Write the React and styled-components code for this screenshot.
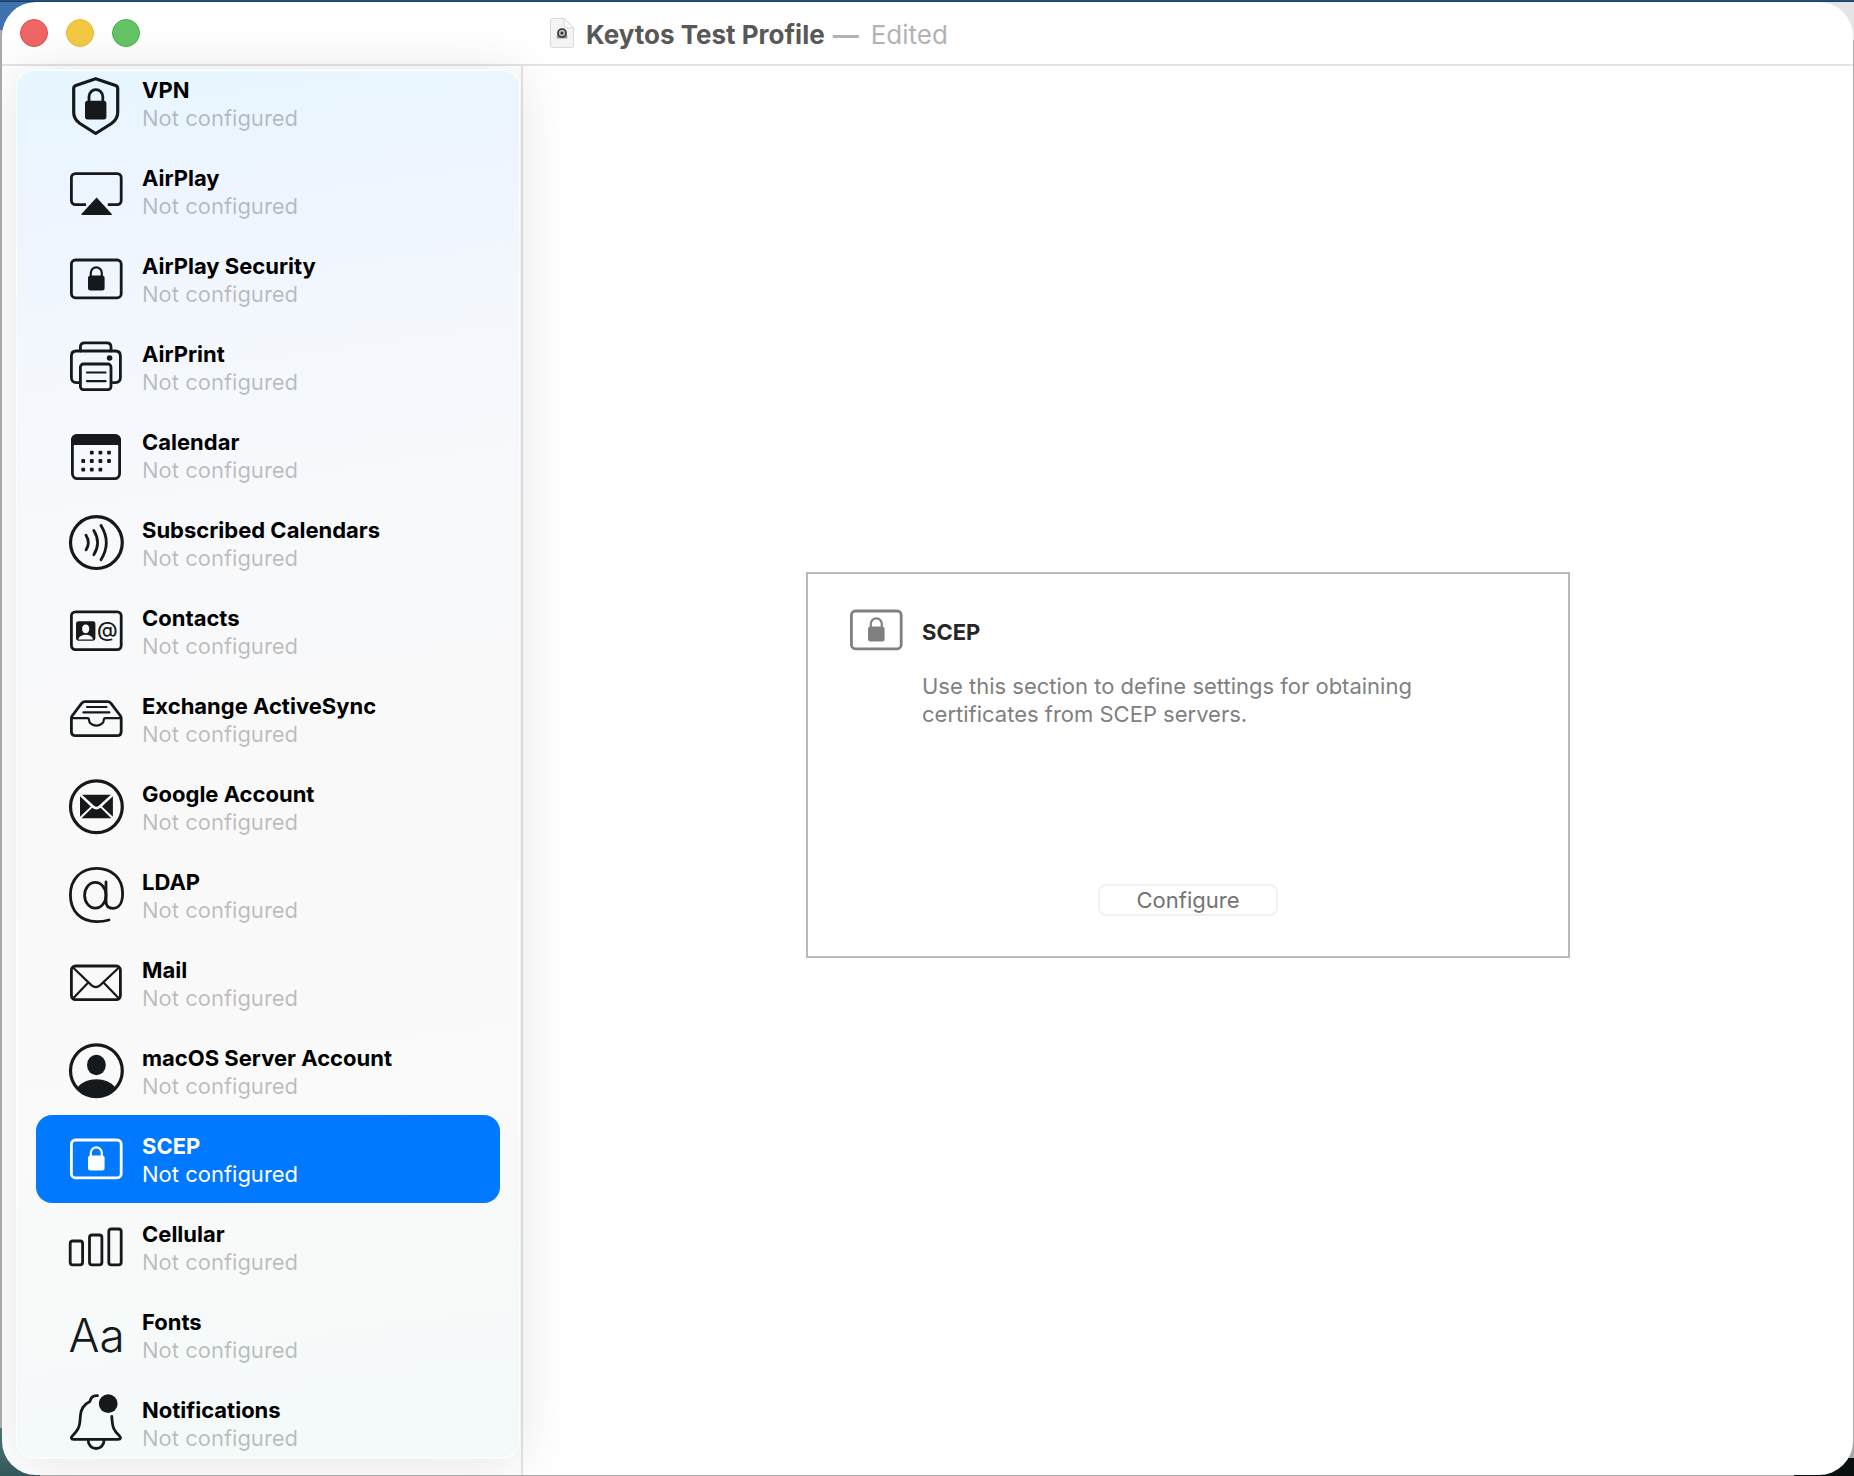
import React, { useState } from "react";
import styled, { createGlobalStyle, css } from "styled-components";

const GlobalStyle = createGlobalStyle`
  * {
    box-sizing: border-box;
  }
  body {
    margin: 0;
    font-family: Inter, "Liberation Sans", sans-serif;
    font-size: 22px;
    line-height: 28px;
    color: #000;
  }
`;

const Desktop = styled.div`
  height: 100vh;
  padding: 2px 1px 1px 2px;
  background:
    linear-gradient(#28588f, #17355c) top / 100% 2px no-repeat,
    linear-gradient(#3d72ad, #3d72ad) top left / 40px 30px no-repeat,
    linear-gradient(#e4e4e4, #e4e4e4) top right / 40px 40px no-repeat,
    linear-gradient(#4c7578, #33585a) bottom left / 40px 48px no-repeat,
    linear-gradient(#0a0f12, #0a0f12) bottom right / 60px 18px no-repeat,
    #a9a9a9;
`;

const Window = styled.div`
  height: 100%;
  display: flex;
  flex-direction: column;
  background: #fff;
  border-radius: 34px;
  overflow: hidden;
`;

const TitleBar = styled.header`
  flex: none;
  display: flex;
  align-items: center;
  height: 64px;
  padding-left: 18px;
  border-bottom: 2px solid #e4e4e4;
`;

const Lights = styled.div`
  flex: none;
  display: flex;
  gap: 18px;
  width: 530px;
`;

const Light = styled.button`
  width: 28px;
  height: 28px;
  padding: 0;
  border-radius: 50%;
  border: 1px solid ${props => props.$edge};
  background: ${props => props.$color};
`;

const Title = styled.h1`
  display: flex;
  margin: 0 0 0 12px;
  padding-top: 4px;
  font-size: 26px;
  line-height: 32px;
  font-weight: 700;
  color: #585858;
`;

const Dash = styled.span`
  margin: 0 12px 0 8px;
  color: #b3b3b3;
`;

const Edited = styled.span`
  font-weight: 400;
  color: #b3b3b3;
`;

const Body = styled.div`
  flex: 1;
  min-height: 0;
  display: flex;
`;

const Sidebar = styled.nav`
  flex: none;
  display: flex;
  width: 521px;
  padding: 3px 1px 16px 14px;
  border-right: 2px solid #e4e4e4;
`;

const Panel = styled.div`
  flex: 1;
  padding: 0 20px;
  overflow: hidden;
  border-radius: 18px;
  border: 1px solid #f4feff;
  border-width: 1px 0;
  background: linear-gradient(
    172deg,
    #e6f6ff 0%,
    #eef5ff 10%,
    #f4f8fd 22%,
    #f8f9fb 36%,
    #f9f9f9 52%,
    #f9faf9 75%,
    #f3f9f9 100%
  );
  box-shadow: 0 4px 56px rgba(0, 0, 0, 0.11), inset 0 0 0 1px #fafeff;
`;

const List = styled.ul`
  margin: -11px 0 0;
  padding: 0;
  list-style: none;
`;

const Label = styled.span`
  padding-top: 1px;
`;

const Name = styled.span`
  display: block;
  font-weight: 700;
`;

const Status = styled.span`
  display: block;
  color: rgba(0, 0, 0, 0.25);
`;

const Row = styled.button`
  display: flex;
  align-items: flex-start;
  gap: 18px;
  width: 100%;
  height: 88px;
  padding: 16px 32px;
  border: 0;
  border-radius: 16px;
  background: none;
  color: #000;
  font: inherit;
  text-align: left;
  ${props =>
    props.$active &&
    css`
      background: #0078ff;
      color: #fff;
      ${Status} {
        color: #fff;
      }
    `}
`;

const Glyph = styled.svg`
  flex: none;
  width: 56px;
  height: 60px;
  overflow: visible;
  color: ${props => props.$color};
  fill: none;
  stroke: currentColor;
  stroke-width: 2.8;
  stroke-linecap: round;
  stroke-linejoin: round;
  .solid {
    fill: currentColor;
    stroke: none;
  }
  .thin {
    stroke-width: 2.2;
  }
  .thick {
    stroke-width: 3.2;
  }
`;

const GlyphText = styled.text`
  fill: currentColor;
  stroke: none;
  font-family: Inter, sans-serif;
  font-size: ${props => props.$size}px;
  font-weight: ${props => props.$weight};
`;

const Main = styled.main`
  flex: 1;
  display: flex;
  align-items: center;
  justify-content: center;
  padding-bottom: 12px;
`;

const Card = styled.section`
  display: flex;
  flex-direction: column;
  width: 764px;
  height: 386px;
  padding: 28px 40px 40px;
  border: 2px solid #b9b9b9;
`;

const CardTop = styled.div`
  display: flex;
  gap: 18px;
`;

const CardText = styled.div`
  padding-top: 16px;
`;

const CardTitle = styled.h2`
  margin: 0 0 26px;
  font-size: 22px;
  line-height: 28px;
  font-weight: 700;
  color: #262626;
`;

const CardInfo = styled.p`
  max-width: 520px;
  margin: 0;
  color: #808080;
`;

const Configure = styled.button`
  align-self: center;
  width: 180px;
  height: 32px;
  margin-top: auto;
  padding: 0 0 2px;
  border: 2px solid #f1f1f1;
  border-radius: 8px;
  background: #fff;
  color: #737373;
  font: inherit;
`;

const LockCard = () => (
  <>
    <rect x="3.4" y="9" width="49.8" height="37.8" rx="4" />
    <rect className="solid" x="20" y="24.5" width="16.6" height="15" rx="2.5" />
    <path className="thin" d="M22.8 26v-4.2a5.5 5.5 0 0 1 11 0V26" />
  </>
);

const icons = {
  vpn: (
    <>
      <path
        className="thick"
        d="M27.7 3.7 47.6 10.4Q49.7 11.2 49.7 13.4V37.5C49.7 42.5 47.5 45.6 43.5 48.5L27.7 58.5 11.9 48.5C7.9 45.6 5.7 42.5 5.7 37.5V13.4Q5.7 11.2 7.8 10.4Z"
      />
      <rect className="solid" x="17" y="25.8" width="21.4" height="18.6" rx="2.6" />
      <path d="M21 27v-5.4a6.9 6.9 0 0 1 13.8 0V27" />
    </>
  ),
  airplay: (
    <>
      <path
        strokeLinecap="butt"
        d="M18 41.6H7.4a4 4 0 0 1-4-4v-23a4 4 0 0 1 4-4h41.8a4 4 0 0 1 4 4v23a4 4 0 0 1-4 4H39.8"
      />
      <path className="solid" d="M28.6 34.4 43.8 51q.4 1-.8 1H14.2q-1.2 0-.8-1Z" />
    </>
  ),
  lock: <LockCard />,
  print: (
    <>
      <path d="M12.4 12V8q0-4.2 4.2-4.2h22.2Q43 3.8 43 8v4" />
      <path d="M11 43.6H8.4q-5 0-5-5V17q0-5 5-5h39q5 0 5 5v21.6q0 5-5 5H45" />
      <rect x="12.4" y="25" width="30.6" height="25.6" rx="3" />
      <path className="thin" d="M19 33.5h18.5M19 42.2h18.5" />
      <circle className="solid" cx="41.6" cy="19" r="2.8" />
    </>
  ),
  calendar: (
    <>
      <rect x="4.4" y="8.4" width="47.2" height="43.2" rx="5" />
      <path className="solid" d="M3 21v-7q0-7 7-7h36q7 0 7 7v7q0-3-3-3H6q-3 0-3 3Z" />
      {[
        [23.8, 25.7], [32.4, 25.7], [41, 25.7],
        [15.2, 34], [23.8, 34], [32.4, 34], [41, 34],
        [15.2, 42.6], [23.8, 42.6], [32.4, 42.6]
      ].map(([x, y]) => (
        <rect
          key={`${x}-${y}`}
          className="solid"
          x={x - 1.9}
          y={y - 1.9}
          width="3.8"
          height="3.8"
          rx="1"
        />
      ))}
    </>
  ),
  waves: (
    <>
      <circle className="thick" cx="28.4" cy="27.6" r="25.9" />
      <path d="M18 20.3q4.6 7.3 0 14.6M25.8 15.4q7.6 12.2 0 24.4M33 10.5q10.6 17.1 0 34.2" />
    </>
  ),
  contacts: (
    <>
      <rect x="3.4" y="8.8" width="49.8" height="37.8" rx="4" />
      <path
        className="solid"
        fillRule="evenodd"
        d="M10.4 18.3h14.6q2.4 0 2.4 2.4v14.6q0 2.4-2.4 2.4H10.4Q8 37.7 8 35.3V20.7q0-2.4 2.4-2.4ZM17.7 21.5c-2.4 0-3.6 1.9-3.6 4.3 0 2.5 1.4 4.500 3.6 4.500s3.6-2 3.6-4.500c0-2.400-1.200-4.300-3.600-4.300ZM10.300 36.400h14.800c-.8-3-3.600-4.600-7.400-4.600s-6.600 1.600-7.400 4.600Z"
      />
      <GlyphText x="29" y="34" $size="21" $weight="500">@</GlyphText>
    </>
  ),
  tray: (
    <>
      <path d="M3.4 27.5q0-1.600 1-3L13.600 12.400q1.400-1.700 3.400-1.700h22.600q2 0 3.400 1.700l9.200 12.100q1 1.400 1 3V40.400q0 4.200-4.200 4.200H7.600q-4.200 0-4.200-4.200Z" />
      <path className="thin" d="M4 27.200h15.400q1.600 0 1.600 1.800a7.400 5.600 0 0 0 14.800 0q0-1.800 1.600-1.800H53M19 16h19.500M15.400 21.400h26" />
    </>
  ),
  google: (
    <>
      <circle className="thick" cx="28.4" cy="27.7" r="25.9" />
      <path className="solid" d="M14 15.700h28.900L30.800 26.800q-2.400 2-4.700 0ZM12 17.300 22.800 27.500 12 37.800ZM44.900 17.300 34 27.500l10.900 10.300ZM24.200 28.800q4.200 3.400 8.400 0l10.700 10.500H13.500Z" />
    </>
  ),
  at: (
    <>
      <path d="M41 53Q35.5 54.7 28.7 54.7C12.4 54.7 2.4 44 2.4 28S13 1.4 28.6 1.4 54.6 11.6 54.6 26.4C54.6 35.6 51 41.3 45 41.3 40.4 41.3 38 38.4 38 34V15" />
      <ellipse cx="27.3" cy="28.3" rx="10.7" ry="12.9" />
    </>
  ),
  mail: (
    <>
      <rect x="3.4" y="11" width="49" height="33.6" rx="4" />
      <path className="thin" d="M5 12.5 23.6 30.4q4.2 3.6 8.4 0L51 12.5M5 43.5 20.3 27.4M51 43.5 35.5 27.4" />
    </>
  ),
  person: (
    <>
      <circle className="thick" cx="28.4" cy="27.7" r="25.9" />
      <ellipse className="solid" cx="28.4" cy="22" rx="9.4" ry="10.2" />
      <path className="solid" d="M9.5 44.5C14 39 20.5 36.3 28.4 36.3S42.8 39 47.3 44.5C42.5 51 36 54.5 28.4 54.5S14.3 51 9.5 44.5Z" />
    </>
  ),
  bars: (
    <>
      <rect x="2.2" y="22" width="12.4" height="23.8" rx="2.6" />
      <rect x="21.5" y="16" width="12.4" height="29.8" rx="2.6" />
      <rect x="40.8" y="10" width="12.4" height="35.8" rx="2.6" />
    </>
  ),
  fonts: (
    <GlyphText x="0.5" y="45" $size="46" $weight="300">Aa</GlyphText>
  ),
  bell: (
    <>
      <path d="M29.5.7C25 .3 22.6 3 21.9 6.5 15.5 9.5 12.6 15 12.3 21.5 12 33 9.5 35.5 4.7 40.5 2.5 43 3.2 44.3 5.5 44.3H50.3C52.6 44.3 53.3 43 51.1 40.5 46 35.5 44.3 33 43.8 21.5" />
      <path d="M20.2 45.5a7.9 8 0 0 0 15.8 0" />
      <circle className="solid" cx="40.2" cy="8.7" r="9.4" />
    </>
  )
};

const Icon = ({ name, color = "currentColor" }) => (
  <Glyph viewBox="0 0 56 60" $color={color} aria-hidden="true">
    {icons[name]}
  </Glyph>
);

const payloads = [
  { name: "VPN", icon: "vpn" },
  { name: "AirPlay", icon: "airplay" },
  { name: "AirPlay Security", icon: "lock" },
  { name: "AirPrint", icon: "print" },
  { name: "Calendar", icon: "calendar" },
  { name: "Subscribed Calendars", icon: "waves" },
  { name: "Contacts", icon: "contacts" },
  { name: "Exchange ActiveSync", icon: "tray" },
  { name: "Google Account", icon: "google" },
  { name: "LDAP", icon: "at" },
  { name: "Mail", icon: "mail" },
  { name: "macOS Server Account", icon: "person" },
  { name: "SCEP", icon: "lock" },
  { name: "Cellular", icon: "bars" },
  { name: "Fonts", icon: "fonts" },
  { name: "Notifications", icon: "bell" }
];

const DocIcon = () => (
  <svg width="24" height="30" viewBox="0 0 24 30" aria-hidden="true">
    <path
      d="M3 .5h11L23.5 10v17q0 2.5-2.5 2.5H3Q.5 29.5.5 27V3Q.5.5 3 .5Z"
      fill="#f4f4f4"
      stroke="#dadada"
    />
    <path d="M14 .5V8q0 2 2 2h7.500Z" fill="#fff" stroke="#d0d0d0" strokeWidth=".8" />
    <path d="M8 13.5 6.5 19q0 1.5 1.5 1.5h8q1.5 0 1.5-1.5L16 13.5Z" fill="#8d9296" />
    <circle cx="12" cy="15" r="4" fill="#b8bec2" stroke="#2d3236" strokeWidth="1.6" />
    <circle cx="12" cy="15" r="1.5" fill="#2d3236" />
  </svg>
);

const App = () => {
  const [selected, setSelected] = useState("SCEP");
  return (
    <Desktop>
      <GlobalStyle />
      <Window>
        <TitleBar>
          <Lights>
            <Light aria-label="Close" $color="#ee6665" $edge="#e24b4a" />
            <Light aria-label="Minimize" $color="#f3c944" $edge="#e9b92b" />
            <Light aria-label="Zoom" $color="#65c466" $edge="#46b04a" />
          </Lights>
          <DocIcon />
          <Title>
            Keytos Test Profile
            <Dash>—</Dash>
            <Edited>Edited</Edited>
          </Title>
        </TitleBar>
        <Body>
          <Sidebar>
            <Panel>
              <List>
                {payloads.map(payload => (
                  <li key={payload.name}>
                    <Row
                      $active={payload.name === selected}
                      onClick={() => setSelected(payload.name)}
                    >
                      <Icon
                        name={payload.icon}
                        color={payload.name === selected ? "#fff" : "#15191b"}
                      />
                      <Label>
                        <Name>{payload.name}</Name>
                        <Status>Not configured</Status>
                      </Label>
                    </Row>
                  </li>
                ))}
              </List>
            </Panel>
          </Sidebar>
          <Main>
            <Card>
              <CardTop>
                <Icon name="lock" color="#808080" />
                <CardText>
                  <CardTitle>SCEP</CardTitle>
                  <CardInfo>
                    Use this section to define settings for obtaining
                    certificates from SCEP servers.
                  </CardInfo>
                </CardText>
              </CardTop>
              <Configure>Configure</Configure>
            </Card>
          </Main>
        </Body>
      </Window>
    </Desktop>
  );
};

export default App;
